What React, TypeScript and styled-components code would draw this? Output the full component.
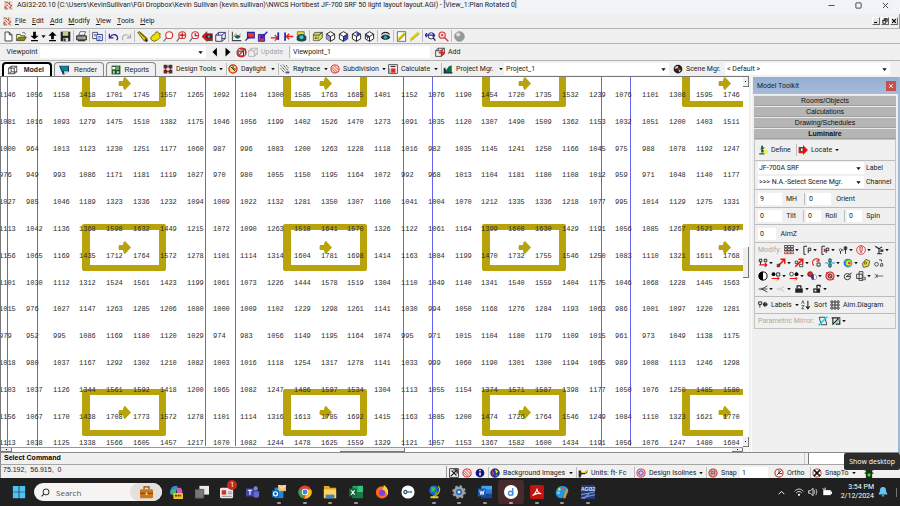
import React from 'react';
import styled, { createGlobalStyle, css } from 'styled-components';

const ui = '"Roboto", "Open Sans", sans-serif';
const gothic = '"Liberation Sans", Arial, sans-serif';

const GlobalStyle = createGlobalStyle`
  *, *::before, *::after { box-sizing: border-box; }
  body { margin: 0; background: #f0f0f0; }
  button, input, select { font: inherit; color: inherit; margin: 0; padding: 0; border: 0; background: none; border-radius: 0; }
  button { cursor: default; white-space: nowrap; }
  svg { display: block; flex: none; }
`;

/* ---------- icons, each drawn on a 16 x 16 grid ---------- */

const cube = (face: React.ReactNode = null) => (
  <>
    <path d="M8 1l6 3.5v7L8 15l-6-3.5v-7z" fill="#fff" stroke="#222" strokeWidth="1.4" />
    {face}
    <path d="M2 4.500l6 3.500 6-3.500M8 8v7" fill="none" stroke="#222" strokeWidth="1.400" />
  </>
);
const lens = (color: string) => (
  <>
    <circle cx="9" cy="6" r="5" fill="#fff" stroke={color} strokeWidth="1.6" />
    <path d="M5 10l-4 5" stroke="#777" strokeWidth="2" />
  </>
);
const wireBox = (color: string) => (
  <path d="M1 6h9v9H1zM5 2h10v9h-5M1 6l4-4M10 6l5-4M10 15l5-4M5 2v4" fill="none" stroke={color} strokeWidth="1.3" />
);

const icons: Record<string, React.ReactNode> = {
  logo: (
    <>
      <rect width="16" height="16" fill="#f3ddd6" />
      <path d="M1 2h5M3 5l4 4M10 1v5l4 3M2 8v6h5M9 10l5 5M10 13l4-6M5 2l5 4M1 11h4" stroke="#a8452c" strokeWidth="1.5" fill="none" />
    </>
  ),
  page: <path d="M3 1.500h6l4 4v9H3zM9 1.500v4h4" fill="#fff" stroke="#333" strokeWidth="1.300" />,
  open: (
    <>
      <path d="M1 14V5h5l1 2h6v3" fill="#ffffa0" stroke="#333" strokeWidth="1.2" />
      <path d="M1 14l3-5h11l-3 5z" fill="#8a8a00" stroke="#333" />
      <path d="M9 3c2-2 4-1 5 2" fill="none" stroke="#333" />
    </>
  ),
  down: <path d="M6 1h4v6h4L8 12 2 7h4zM3 13h10v2H3z" fill="#000" />,
  up: <path d="M8 1l6 6h-4v5H6V7H2zM3 13h10v2H3z" fill="#000" />,
  save: (
    <>
      <path d="M1 1h14v14H1z" fill="#222" />
      <path d="M4 1h8v6H4z" fill="#c9c98c" />
      <path d="M5 10h7v5H5z" fill="#ddd" />
      <path d="M6 11h2v4H6z" fill="#222" />
    </>
  ),
  print: (
    <>
      <path d="M4 6l2-5h8l-2 5z" fill="#fff" stroke="#333" />
      <path d="M1 7h14v6H1z" fill="#999" stroke="#222" strokeWidth="1.400" />
      <path d="M3 13h10v2H3z" fill="#333" />
      <path d="M10 10h3" stroke="#dd0" strokeWidth="1.500" />
    </>
  ),
  copy: (
    <>
      <path d="M1 2h7v9H1z" fill="#fff" stroke="#334" strokeWidth="1.200" />
      <path d="M7 5h8v9H7z" fill="#fff" stroke="#223a9a" strokeWidth="1.400" />
      <path d="M9 8h4M9 10h4M9 12h3M3 5h3M3 7h3" stroke="#223a9a" />
    </>
  ),
  undo: <path d="M2 4v6h6M3 9c3-5 10-5 11 1 0 2-1 3-2 3" fill="none" stroke="#22229c" strokeWidth="1.800" />,
  redo: <path d="M14 4v6H8M13 9C10 4 3 4 2 10c0 2 1 3 2 3" fill="none" stroke="#aaa" strokeWidth="1.500" />,
  pencil: (
    <>
      <path d="M1 2l3-1 11 10-1 4-4-1z" fill="#e2d400" stroke="#444" strokeWidth="1.200" />
      <path d="M4 2l10 10" stroke="#665c00" strokeWidth="1.500" />
      <path d="M12 12l3 3" stroke="#111" strokeWidth="2.500" />
    </>
  ),
  hand: <path d="M1 10l3-4 3-1 1-3 3-1 1 2 3 1-1 3 1 2-4 4-5 2-4-2z" fill="#ece000" stroke="#777000" strokeWidth="1.400" />,
  zoomIn: lens('#d33'),
  zoomWin: (
    <>
      {lens('#d33')}
      <path d="M9 2v8M5 6h8" stroke="#b00" strokeWidth="1.500" />
    </>
  ),
  zoomPrev: (
    <>
      {lens('#d33')}
      <path d="M9 3v4h4" stroke="#229" strokeWidth="1.500" fill="none" />
    </>
  ),
  eyeRed: (
    <>
      <path d="M0 8l7-7v3h8v10H7v1z" fill="#d11" stroke="#333" />
      <path d="M5 8c3-4 7-4 10 0-4 4-7 4-10 0z" fill="#123" />
      <circle cx="10" cy="8" r="2" fill="#2ab5c0" />
    </>
  ),
  box3d: wireBox('#2d2d70'),
  chart: (
    <>
      <path d="M2 1v13h13" stroke="#444" strokeWidth="1.500" fill="none" />
      <path d="M3 9l4-5 3 6 4-6" stroke="#bb9" strokeWidth="2" fill="#f4ec60" />
      <path d="M5 8c3-3 6-3 9 0-3 4-6 4-9 0z" fill="#145e70" />
    </>
  ),
  redBox: (
    <>
      <path d="M5 2h10v8H5z" fill="#e33" stroke="#22a" strokeWidth="1.500" />
      <path d="M2 14l6-6" stroke="#22a" strokeWidth="2" />
    </>
  ),
  slant: (
    <>
      <path d="M2 5h9v10H2z" fill="#d33" stroke="#22a" strokeWidth="1.300" />
      <path d="M15 1L6 10V6m0 4h4" stroke="#22c" strokeWidth="2" fill="none" />
    </>
  ),
  trimL: <><path d="M1 10h9M7 6l4 4-4 4" stroke="#d22" strokeWidth="2" fill="none" /><path d="M12 2v11" stroke="#22a" strokeWidth="2.500" /></>,
  trimR: <><path d="M15 8H6M9 4L5 8l4 4" stroke="#d22" strokeWidth="2" fill="none" /><path d="M3 2v12" stroke="#22a" strokeWidth="2.500" /></>,
  eyeBox: (
    <>
      <path d="M2 1h10v5H2z" fill="#e6da2a" stroke="#555" />
      <path d="M1 8c4-5 10-5 14 0v5c-4 3-10 3-14 0z" fill="#1d4a50" />
      <circle cx="8" cy="9" r="3" fill="#4ac4c0" />
    </>
  ),
  boxPlan: (
    <>
      <path d="M2 5h8v9H2z" fill="#f0e93a" stroke="#444" />
      <path d="M4 2h11L10 6H2zM10 6l5-4v8l-5 4" fill="#cfe35c" stroke="#444" strokeWidth="1.200" />
      <path d="M4 9h4M4 11h4" stroke="#22a" />
    </>
  ),
  cubeA: cube(<path d="M2 4.500L8 8v7l-6-3.500z" fill="#8f98d8" />),
  cubeB: cube(<path d="M14 4.500L8 8v7l6-3.500z" fill="#3c48c8" />),
  cubeC: cube(<path d="M8 1l6 3.500L8 8z" fill="#3c48c8" />),
  cubeD: cube(<path d="M2 4.500L8 8l-3 4z" fill="#3c48c8" />),
  eye: (
    <>
      <path d="M1 9c3-5 11-5 14 0-3 5-11 5-14 0z" fill="#234" />
      <circle cx="8" cy="9" r="2.500" fill="#3aa" />
      <path d="M2 5c3-4 9-4 12 0" stroke="#222" strokeWidth="1.500" fill="none" />
    </>
  ),
  sheet: <><path d="M2 1h12v14H2z" fill="#fff" stroke="#555" strokeWidth="1.200" /><path d="M3 13L13 3" stroke="#d8cc00" strokeWidth="3.500" /><path d="M4 14L14 4" stroke="#555" /></>,
  ruler: <><path d="M2 13L14 2" stroke="#e4d800" strokeWidth="3.500" /><path d="M2 15L15 4" stroke="#777" /></>,
  zoomBlue: (
    <>
      <circle cx="9" cy="7" r="4.500" fill="#fff" stroke="#333" strokeWidth="1.400" />
      <path d="M12 10l3 4" stroke="#333" strokeWidth="2" />
      <path d="M0 6h14M3 3L0 6l3 3M11 3l3 3-3 3" stroke="#22c" strokeWidth="1.700" fill="none" />
    </>
  ),
  zoomRed: <><circle cx="6" cy="6" r="4.500" fill="#fdd" stroke="#d33" strokeWidth="1.700" /><path d="M9 9l6 6" stroke="#d33" strokeWidth="2" /><circle cx="6" cy="6" r="1.500" fill="#d33" /></>,
  ball: <><circle cx="8" cy="8" r="7" fill="#999" stroke="#888" /><circle cx="6" cy="5" r="3" fill="#ddd" /></>,
  back: <path d="M11 1v14L4 8z" fill="#000" />,
  forward: <path d="M4 1l8 7-8 7z" fill="#000" />,
  noBox: <><path d="M3 6h8v7H3zM6 3h8v7" fill="none" stroke="#222" strokeWidth="1.400" /><circle cx="8" cy="8" r="6.500" fill="none" stroke="#c22" strokeWidth="1.800" /><path d="M3 13L13 3" stroke="#c22" strokeWidth="1.800" /></>,
  greyBox: wireBox('#aaa'),
  addBox: <>{wireBox('#333')}<path d="M11 4v10M6 9h10" stroke="#d22" strokeWidth="3" /></>,
  model: <path d="M1 5h9v9H1zM5 2h9v9M1 5l4-3M10 5l4-3M10 14l4-3M5 2v9h9M1 14l4-3" fill="none" stroke="#222" strokeWidth="1.200" />,
  render: <><path d="M0 1h16v10H9v4H6z" fill="#123a78" /><path d="M2 2h12v7H6z" fill="#108a86" /><path d="M8 10h7v4H9z" fill="#d8d8d8" /></>,
  report: <><path d="M1 1h14v14H1z" fill="#234a2c" /><path d="M2 3h5v4H2z" fill="#fff" /><path d="M8 2h5v6H8z" fill="#56b05a" /><path d="M3 9h3v5H3zM9 10h4v3H9z" fill="#9fd6a2" /></>,
  design: <><path d="M1 1h6v6H1zM9 1h6v6H9zM1 9h6v6H1zM9 9h6v6H9z" fill="#7b2621" /><path d="M2 4h12M2 12h12M4 2v12M12 2v12" stroke="#333" strokeWidth="1.200" /></>,
  sun: <><circle cx="8" cy="8" r="6.500" fill="#f5e06a" stroke="#d22" strokeWidth="2" /><path d="M4 4l8 8M8 3v5h5" stroke="#333" strokeWidth="1.500" fill="none" /></>,
  ray: <><path d="M1 2l8 9M5 1l8 10M1 7l6 7M10 2l4 5" stroke="#333" strokeWidth="1.500" strokeDasharray="2 1" /><path d="M9 12h6v3H9z" fill="#555" /></>,
  no: <><circle cx="8" cy="8" r="6.500" fill="#f8dcd8" stroke="#d33" strokeWidth="1.600" /><path d="M3 4l9 9M6 2l8 8M2 7l7 7" stroke="#d33" strokeWidth="1.200" /></>,
  calc: <><path d="M1 1h14v14H1z" fill="#fff" stroke="#333" strokeWidth="1.300" /><path d="M4 3h8v2H4z" fill="#333" /><path d="M5 7h7v7H5z" fill="#e22" /><path d="M3 7v7" stroke="#333" /></>,
  project: <><path d="M1 14V6l4 4 4-6 5-2v12z" fill="#0c6b4a" /><path d="M1 14h14M3 6v8" stroke="#123" strokeWidth="2" /></>,
  scene: <><circle cx="8" cy="8" r="7" fill="#222" /><path d="M3 8a5 5 0 0 1 5-5v3zM9 10l4-1-3 4z" fill="#ddd" /><circle cx="9" cy="8" r="2" fill="#c22" /></>,
  define: <><circle cx="12" cy="11" r="4" fill="#f6ef5a" /><path d="M5 1h3v3h3L7 8 2 6h3zM5 8h4v4H5zM2 13h8v2H2z" fill="#1b5b3d" /></>,
  locate: <><path d="M1 3h7V0l8 8-8 8v-3H1z" fill="#e11" /><path d="M4 5h4v5H4z" fill="#fff" stroke="#222" /></>,
  grid9: <>{[3, 8, 13].map((x) => [3, 8, 13].map((y) => <circle key={`${x}-${y}`} cx={x} cy={y} r="1.800" fill="#fff" stroke="#222" strokeWidth="1.500" />))}</>,
  grid9r: <>{[3, 8, 13].map((x) => [3, 8, 13].map((y) => <rect key={`${x}-${y}`} x={x - 2} y={y - 2} width="4" height="3" fill="none" stroke={y === 13 ? '#c22' : '#222'} strokeWidth="1.200" />))}</>,
  poles: <path d="M3 15V2h5M10 13V5h4v4h-4M3 15h3" fill="none" stroke="#222" strokeWidth="1.500" />,
  polesR: <><path d="M3 15V2h5M10 13V5h4v4h-4M3 15h3" fill="none" stroke="#222" strokeWidth="1.500" /><path d="M6 6h3v5H6z" fill="#e11" /></>,
  polesA: <><path d="M4 14V8h5M12 14V3M10 3h4v4h-4z" fill="none" stroke="#222" strokeWidth="1.500" /><circle cx="4" cy="8" r="2" fill="#fff" stroke="#222" /></>,
  lampNo: <><circle cx="8" cy="8" r="7" fill="none" stroke="#d33" strokeWidth="1.400" /><path d="M6 3h4v5L8 13 6 8z" fill="#f6c0b0" stroke="#c22" /></>,
  lampUp: <><path d="M2 2l6 4 5-3M8 6v8M5 14h8" stroke="#222" strokeWidth="1.800" fill="none" /><path d="M10 7h5v4h-5z" fill="#344" /></>,
  swap: <><path d="M2 2h4v4H2zM10 2h4v4h-4zM4 6v5" fill="none" stroke="#222" strokeWidth="1.500" /><path d="M2 11h12M11 8l3 3-3 3" stroke="#e11" strokeWidth="2" fill="none" /></>,
  arrowR: <><path d="M2 14L13 3M7 2h7v7" stroke="#e11" strokeWidth="2.400" fill="none" /><path d="M2 10h4v4H2z" fill="none" stroke="#222" strokeWidth="1.300" /></>,
  arrowR2: <><path d="M2 14L13 3M7 2h7v7" stroke="#e11" strokeWidth="2.400" fill="none" /><path d="M2 5h4v4H2zM9 10h5v4H9z" fill="#fff" stroke="#222" strokeWidth="1.300" /></>,
  rotate: <><path d="M3 12a6 6 0 0 1 8-9M11 1v4H7" stroke="#e11" strokeWidth="1.800" fill="none" /><path d="M8 8h5v5H8z" fill="none" stroke="#222" strokeWidth="1.400" /></>,
  align: <><path d="M0 8h16" stroke="#20c0d0" strokeWidth="2" /><path d="M6 2h4v4H6zM6 10h4v4H6zM8 0v16" fill="none" stroke="#156" strokeWidth="1.400" /></>,
  rainbow: <><circle cx="8" cy="8" r="7" fill="#2a6adf" /><circle cx="9" cy="8" r="5.500" fill="#35d048" /><circle cx="9" cy="8" r="4" fill="#f4e02e" /><circle cx="10" cy="8" r="2.200" fill="#e33" /></>,
  bolt: <><path d="M2 9l6-7 6 3-2 8-8 2z" fill="#eee322" stroke="#444" strokeWidth="1.300" /><circle cx="7" cy="8" r="2" fill="none" stroke="#222" /></>,
  percent: <><circle cx="4" cy="10" r="3" fill="none" stroke="#333" strokeWidth="1.300" /><path d="M8 3h4v3M11 9h3v4h-4z" fill="none" stroke="#333" strokeWidth="1.300" /></>,
  contrast: <><circle cx="8" cy="8" r="6.500" fill="#fff" stroke="#000" strokeWidth="1.500" /><path d="M8 1a7 7 0 0 0 0 14z" fill="#000" /></>,
  dots: <><circle cx="4" cy="5" r="3" fill="#000" /><path d="M9 3h5v5H9z" fill="none" stroke="#222" strokeWidth="1.400" /><path d="M1 12h12M10 9l3 3-3 3" stroke="#e11" strokeWidth="1.600" fill="none" /></>,
  dots2: <><circle cx="4" cy="5" r="3" fill="#fff" stroke="#222" strokeWidth="1.300" /><circle cx="12" cy="5" r="3" fill="#000" /><path d="M1 12h12M10 9l3 3-3 3" stroke="#e11" strokeWidth="1.600" fill="none" /></>,
  swatch: <><circle cx="5" cy="5" r="4" fill="#e22" stroke="#222" /><circle cx="11" cy="10" r="4" fill="#33c" stroke="#222" /><path d="M11 6a4 4 0 0 1 0 8z" fill="#fff" /></>,
  target: <><circle cx="8" cy="8" r="6.500" fill="#e9b2a8" stroke="#c22" strokeWidth="1.700" /><circle cx="8" cy="8" r="3" fill="none" stroke="#333" strokeWidth="1.500" /><path d="M2 2l12 12" stroke="#c22" strokeWidth="1.500" /></>,
  aim: <><circle cx="7" cy="9" r="5" fill="none" stroke="#333" strokeWidth="1.500" /><path d="M5 9l9-6M5 9h6" stroke="#333" strokeWidth="1.500" /></>,
  copyPlus: <><path d="M1 5h9v7H1zM5 1h6v14H5z" fill="none" stroke="#333" strokeWidth="1.400" /><path d="M10 10h5v4h-5z" fill="#bbb" stroke="#333" /></>,
  stem: <path d="M15 8H5M5 5v6M5 8L1 5M5 8l-4 3" stroke="#555" strokeWidth="1.300" fill="none" />,
  fan: <path d="M1 8h3M5 6v4M6 8l9-5M6 8h9M6 8l9 5" stroke="#333" strokeWidth="1.400" fill="none" />,
  fanGrey: <path d="M1 8h3M5 6v4M7 8l6-4M7 8l6 4" stroke="#bbb" strokeWidth="1.400" fill="none" />,
  lock: <><path d="M5 7V3h6v4" fill="none" stroke="#222" strokeWidth="2" /><path d="M2 7h12v7H2z" fill="#222" /></>,
  unlock: <><path d="M8 7V2h5v3" fill="none" stroke="#222" strokeWidth="2" /><path d="M2 7h11v7H2z" fill="#222" /><path d="M4 9h3v3H4z" fill="#eee" /></>,
  labels: <><path d="M1 3h5v4H1zM3 7v5" fill="none" stroke="#222" strokeWidth="1.500" /><path d="M8 7h7M11 3v8M9 5h5v4H9z" stroke="#222" strokeWidth="1.500" fill="none" /></>,
  sort: <><path d="M1 6l2-5 2 5M1 9h4l-4 5h4" stroke="#444" strokeWidth="1.300" fill="none" /><path d="M11 1v12M8 10l3 4 3-4" stroke="#222" strokeWidth="1.700" fill="none" /></>,
  mirror: <><path d="M2 2h9l3 12H5z" fill="none" stroke="#222" strokeWidth="1.300" /><path d="M1 15L15 1" stroke="#22cfe0" strokeWidth="2.400" /></>,
  mirror2: <><path d="M1 3h14M3 3v10l9-9M8 13h6V5" fill="none" stroke="#222" strokeWidth="1.800" /><path d="M6 14L15 5" stroke="#22b8b0" strokeWidth="1.500" /></>,
  picker: <><path d="M1 1h14v14H1z" fill="#fff" stroke="#333" strokeWidth="1.500" /><path d="M3 13l9-9M4 4l8 8M7 3h6v6" stroke="#222" strokeWidth="2" fill="none" /></>,
  info: <><circle cx="8" cy="8" r="7" fill="#15157c" /><path d="M8 7v5" stroke="#fff" strokeWidth="2.400" /><circle cx="8" cy="4" r="1.400" fill="#fff" /></>,
  image: <><circle cx="8" cy="8" r="7" fill="#2334b4" stroke="#224" /><path d="M3 3l4 5-3 5z" fill="#e33" /><path d="M8 2l5 3-3 4z" fill="#dfe82e" /><path d="M9 10l4 1-4 3z" fill="#3b4" /></>,
  units: <><path d="M1 4h4v3h5l5-4v4l-4 3H6l-2 5H1z" fill="#2e2e2e" /><path d="M6 7h6l3-3" stroke="#e8d820" strokeWidth="2" fill="none" /></>,
  isoline: <><circle cx="8" cy="8" r="6.500" fill="#e7c4e2" stroke="#d33" strokeWidth="1.500" /><circle cx="8" cy="8" r="3.500" fill="none" stroke="#33b" strokeWidth="1.300" /></>,
  snap: <><circle cx="8" cy="8" r="6.500" fill="#e7b4aa" stroke="#c33" strokeWidth="1.700" /><path d="M4 6h8M4 9h8M6 4v8M10 4v8" stroke="#555" /></>,
  ortho: <><circle cx="8" cy="8" r="6.500" fill="#fff" stroke="#c33" strokeWidth="1.800" /><path d="M8 3v6h5M4 12l8-8" stroke="#333" strokeWidth="1.500" fill="none" /></>,
  snapTo: <><circle cx="8" cy="8" r="6.500" fill="#fff" stroke="#c33" strokeWidth="1.500" /><path d="M3 3l10 10M13 3L3 13" stroke="#111" strokeWidth="2.400" /></>,
  traffic: <><path d="M4 0h8v16H4zM1 3h14M1 8h14" fill="#143814" stroke="#143814" strokeWidth="2" /><circle cx="8" cy="11" r="2.500" fill="#3ee23e" /></>,

  windows: <path d="M1 1h6.600v6.600H1zM8.400 1H15v6.600H8.400zM1 8.400h6.600V15H1zM8.400 8.400H15V15H8.400z" fill="#4cc2f5" />,
  briefcase: <><path d="M5 4V1h6v3" fill="none" stroke="#8a4b10" strokeWidth="1.500" /><rect y="4" width="16" height="11" rx="1.500" fill="#c9771c" /><path d="M0 9h16" stroke="#8a4b10" strokeWidth="1.500" /><path d="M7 8h2v3H7z" fill="#ffe08a" /></>,
  copilot: <><path d="M2 11C0 8 2 2 6 1h4l-3 9z" fill="#2f8ae0" /><path d="M2 6c0 5 2 6 5 5l2-7z" fill="#44b95a" /><path d="M9 3h4c3 2 3 7 0 10l-4-3z" fill="#d957b5" /><rect x="5" y="9" width="11" height="7" rx="1" fill="#f3c32c" /><path d="M7 12h7" stroke="#3a2d00" strokeWidth="2" strokeDasharray="2 1" /></>,
  taskview: <><path d="M5 1h11v10H5z" fill="#e9e9e9" /><path d="M0 5h10v10H0z" fill="#777" stroke="#555" /></>,
  news: <><rect y="3" width="15" height="12" rx="1.500" fill="#f1e6e6" /><path d="M2 6h5v5H2z" fill="#c03535" /><path d="M9 8h5M9 10h5M2 13h12" stroke="#888" /></>,
  teams: <><circle cx="11" cy="4" r="2.500" fill="#7b83eb" /><path d="M8 7h7v5c0 3-6 4-7 0z" fill="#6069d4" /><path d="M0 4h9v9H0z" fill="#3f48b5" /><path d="M2 6h5M4.500 6v5" stroke="#fff" strokeWidth="1.300" /></>,
  outlook: <><path d="M3 3h10v12H3z" fill="#1b88d8" /><path d="M7 0h9v7H7z" fill="#f2bd73" /><path d="M7 0l4.500 4L16 0" stroke="#fff" fill="none" /><path d="M0 6h8v8H0z" fill="#0f64b4" /><circle cx="4" cy="10" r="2.300" fill="none" stroke="#fff" strokeWidth="1.400" /></>,
  chrome: <><circle cx="8" cy="8" r="7.500" fill="#e34133" /><path d="M1.500 4.300L8 8l-2 7.300A7.500 7.500 0 0 1 1.500 4.300z" fill="#2fa24f" /><path d="M15 5H8l2 5-3 5.500A7.500 7.500 0 0 0 15 5z" fill="#fbc016" /><circle cx="8" cy="8" r="3.700" fill="#fff" /><circle cx="8" cy="8" r="2.800" fill="#3f7fe8" /></>,
  folder: <><path d="M1 1h6l1 2h7v12H1z" fill="#e2a52b" /><path d="M1 5h14v10H1z" fill="#fbd464" /><path d="M3 11h10v4H3z" fill="#3287d4" /></>,
  excel: <><path d="M4 1h12v14H4z" fill="#24a366" /><path d="M10 1h6v7h-6z" fill="#33c481" /><path d="M4 8h12v7H4z" fill="#177a47" /><path d="M0 4h9v9H0z" fill="#10683a" /><path d="M2.500 6l4 5M6.500 6l-4 5" stroke="#fff" strokeWidth="1.300" /></>,
  firefox: <><circle cx="8" cy="8.500" r="7" fill="#ff6a26" /><path d="M10 0c5 3 6 8 4 12-1-5-4-6-6-7 2-1 2-3 2-5z" fill="#ffce35" /><circle cx="8" cy="9" r="3.500" fill="#7a45d8" /><path d="M1 6c0 6 4 9 9 9-5 1-9-2-9-9z" fill="#e3204f" /></>,
  key: <><circle cx="8" cy="8" r="7.500" fill="#fff" /><circle cx="5" cy="8" r="1.800" fill="none" stroke="#246" strokeWidth="1.300" /><path d="M7 8h3" stroke="#246" strokeWidth="1.300" /><circle cx="11.500" cy="8" r="1.300" fill="#2aa6c8" /></>,
  globe: <><circle cx="8" cy="6" r="5.500" fill="#1a63c8" /><path d="M5 2l5 1-1 4-4 1zM9 8h3l-2 3z" fill="#3ac04e" /><path d="M13 1c3 4 1 10-4 11" stroke="#d8c020" strokeWidth="1.200" fill="none" /><path d="M4 14h9M8 12v2" stroke="#e6cf28" strokeWidth="2.400" /></>,
  gear: <><circle cx="8" cy="8" r="6.300" fill="#9aa2ac" /><circle cx="8" cy="8" r="6.600" fill="none" stroke="#9aa2ac" strokeWidth="2.400" strokeDasharray="2.600 2.580" /><circle cx="8" cy="8" r="3.400" fill="#1c5fae" /><circle cx="8" cy="8" r="1.800" fill="#cfe6ff" /></>,
  word: <><path d="M4 1h12v14H4z" fill="#2b7cd3" /><path d="M4 1h12v4H4z" fill="#41a5ee" /><path d="M4 10h12v5H4z" fill="#14459a" /><path d="M0 4h9v9H0z" fill="#185abd" /><path d="M2 6l1.300 5 1.200-4 1.200 4L7 6" stroke="#fff" fill="none" /></>,
  dialog: <><circle cx="8" cy="8" r="8" fill="#fff" /><circle cx="7.500" cy="9.500" r="2.400" fill="none" stroke="#3b8fe0" strokeWidth="1.600" /><path d="M10 3.500V12" stroke="#3b8fe0" strokeWidth="1.600" /></>,
  acrobat: <><rect width="16" height="16" rx="2" fill="#c4120c" /><path d="M3 12c3-2 5-6 5-8 0 3 2 6 5 6-4-1-7 0-10 2z" fill="none" stroke="#fff" strokeWidth="1.300" /></>,
  paint: <><path d="M8 1c5 0 8 3 7 7s-4 2-5 4-1 3-3 3C3 15 0 11 1 7s4-6 7-6z" fill="#1f9ae0" /><circle cx="5" cy="5" r="1.500" fill="#f4d03a" /><circle cx="9" cy="4" r="1.500" fill="#e8523a" /><circle cx="4" cy="9" r="1.500" fill="#7fd8f4" /><path d="M9 15l4-11 2 1-3 10z" fill="#d9953a" /></>,
  agi: <><rect width="16" height="16" fill="#253a6e" /><path d="M0 11l16-3M0 15l16-4M3 16l7-7" stroke="#6f94d8" strokeWidth="1.300" /></>,
  caret: <path d="M3 11l5-5 5 5" fill="none" stroke="#fff" strokeWidth="1.700" />,
  wifi: <><path d="M1 7c4-5 10-5 14 0M3.500 9.500c3-3 6-3 9 0" fill="none" stroke="#ddd" strokeWidth="1.500" /><circle cx="8" cy="12.500" r="1.700" fill="#fff" /></>,
  sound: <><path d="M1 6h3l4-4v12l-4-4H1z" fill="none" stroke="#fff" strokeWidth="1.300" /><path d="M10 5c1 2 1 4 0 6M12.500 3c2 3 2 7 0 10" fill="none" stroke="#ddd" strokeWidth="1.300" /></>,
  battery: <><path d="M2 5h12v8H2z" fill="#fff" /><path d="M14 7h2v4h-2z" fill="#fff" /><path d="M1 2l3 3M5 1v4" stroke="#fff" strokeWidth="1.500" /></>,
  bell: <path d="M8 0c4 0 5 3 5 7l2 4v1H1v-1l2-4c0-4 1-7 5-7zM6 13h4c0 3-4 3-4 0z" fill="#62c7f2" />,
  search: <><circle cx="9" cy="7" r="5.300" fill="none" stroke="#222" strokeWidth="1.700" /><path d="M5 11l-4 4" stroke="#222" strokeWidth="1.900" /></>,
  min: <path d="M1 8h14" stroke="#333" strokeWidth="2" />,
  max: <rect x="2" y="2" width="12" height="12" rx="1" fill="none" stroke="#333" strokeWidth="2" />,
  close: <path d="M2 2l12 12M14 2L2 14" stroke="#333" strokeWidth="2" />,
  closeWhite: <path d="M3 3l10 10M13 3L3 13" stroke="#fff" strokeWidth="2.400" />,
  mdiMin: <path d="M3 12h8" stroke="#000" strokeWidth="3" />,
  mdiRestore: <path d="M5 2h9v7h-3M2 6h8v8H2zM5 3h9M2 7h8" fill="none" stroke="#000" strokeWidth="2" />,
  mdiClose: <path d="M3 3l10 10M13 3L3 13" stroke="#000" strokeWidth="3" />,
  tri: <path d="M1 4h14l-7 9z" fill="#111" />,
};

const Icon = ({ name, size = 11 }: { name: string; size?: number }) => (
  <svg width={size} height={size} viewBox="0 0 16 16" aria-hidden="true">
    {icons[name]}
  </svg>
);

/* ---------- shared pieces ---------- */

const Shell = styled.div`
  display: flex;
  flex-direction: column;
  height: 100vh;
  overflow: hidden;
  background: #f0f0f0;
  color: #222;
  font: 7px/10px ${ui};
`;

const Bar = styled.div<{ $h: number }>`
  display: flex;
  align-items: center;
  flex: none;
  height: ${(p) => p.$h}px;
`;

const Spacer = styled.div`
  flex: 1;
`;

const Divider = styled.span`
  flex: none;
  width: 1px;
  height: 12px;
  margin: 0 1px;
  background: #bdbdbd;
`;

const ToolButton = styled.button<{ $w?: number; $muted?: boolean }>`
  display: flex;
  align-items: center;
  gap: 3px;
  flex: none;
  width: ${(p) => (p.$w ? `${p.$w}px` : 'auto')};
  height: 13px;
  justify-content: ${(p) => (React.Children.count(p.children) > 1 ? 'flex-start' : 'center')};
  color: ${(p) => (p.$muted ? '#a4a4a4' : 'inherit')};
`;

const Grow = styled.span`
  flex: 1;
  text-align: left;
`;

const Gap = styled.span<{ $w: number }>`
  flex: none;
  width: ${(p) => p.$w}px;
`;

const ComboBox = styled.div<{ $w?: number }>`
  display: flex;
  align-items: center;
  flex: ${(p) => (p.$w ? `0 0 ${p.$w}px` : '1')};
  height: 12px;
  background: #fff;
  select {
    flex: 1;
    min-width: 0;
    height: 12px;
    padding-left: 2px;
    appearance: none;
    outline: 0;
  }
  svg { margin: 0 3px 0 -7px; pointer-events: none; }
`;

const Combo = ({ label, value, w }: { label: string; value: string; w?: number }) => (
  <ComboBox $w={w}>
    <select aria-label={label} defaultValue={value}>
      <option>{value}</option>
    </select>
    <Icon name="tri" size={5} />
  </ComboBox>
);

/* ---------- title, menu and tool bars ---------- */

const TitleBar = styled(Bar)`
  padding: 0 3px 4px 4px;
  gap: 4px;
  background: linear-gradient(90deg, #f3f3f3, #f0f3f9);
  white-space: nowrap;
`;

const WindowButtons = styled.div`
  display: flex;
  gap: 20px;
  padding-right: 8px;
`;

const MenuBar = styled(Bar)`
  padding: 0 1px 0 3px;
  border-bottom: 1px solid #b4b4b4;
  border-right: 1px solid #999;
`;

const MenuItem = styled.button`
  margin-left: 6px;
  &:first-of-type { margin-left: 3px; }
  &::first-letter { text-decoration: underline; }
`;

const MdiButton = styled.button`
  display: grid;
  place-items: center;
  width: 8px;
  height: 8px;
  margin-left: 1px;
  border: 1px solid;
  border-color: #fff #666 #666 #fff;
  background: #e6e6e6;
`;

const Tools = styled(Bar)`
  padding-left: 2px;
  border-bottom: 1px solid #b4b4b4;
`;

const ViewBar = styled(Bar)`
  border-bottom: 1px solid #b4b4b4;
  padding-left: 4px;
`;

const Field = styled.input<{ $w: number }>`
  flex: none;
  width: ${(p) => p.$w}px;
  height: 12px;
  padding: 0 2px;
  background: #fff;
`;

const ModeBar = styled(Bar)`
  padding: 1px 10px 0 2px;
  align-items: stretch;
`;

const Tab = styled.button<{ $active?: boolean }>`
  display: flex;
  align-items: center;
  width: 50px;
  margin-right: 2px;
  padding: 0 6px 0 4px;
  border: 1px solid #888;
  border-bottom: 0;
  border-radius: 4px 4px 0 0;
  font: 7px/10px ${gothic};
  ${(p) => p.$active && css`
    border: 2px solid #000;
    border-bottom: 0;
    font-weight: 700;
    background: #fff;
  `}
`;

const ModeTools = styled.div`
  display: flex;
  align-items: center;
  flex: 1;
  padding-left: 5px;
`;

const toolRow = [
  'page', 'open', 'down', '>', 'up', 'save', '|', 'print', '|', 'copy', '|', 'undo', 'redo', '|',
  'pencil', 'hand', 'zoomIn', 'zoomWin', 'zoomPrev', 'eyeRed', 'box3d', '|',
  'chart', 'redBox', 'slant', 'trimL', 'trimR', 'eyeBox', '|',
  'boxPlan', 'cubeA', 'cubeB', 'cubeC', 'cubeD', '|', 'eye', '|', 'sheet', 'ruler', '|',
  'zoomBlue', 'zoomRed', '|', 'ball',
];

/* ---------- plan view ---------- */

const Workspace = styled.div`
  display: flex;
  flex: 1;
  min-height: 0;
`;

const PlanFrame = styled.div`
  display: grid;
  grid-template: minmax(0, 1fr) 5px / minmax(0, 1fr) 6px;
  flex: 1;
  min-width: 0;
  border-left: 1px solid #777;
  border-top: 1px solid #777;
  background: #f6f6f6;
`;

const PlanView = styled.div`
  overflow: hidden;
  background: #fff;
  svg text {
    font: 7px "Liberation Mono", monospace;
    fill: #2c2c2c;
    white-space: pre;
  }
`;

const VScroll = styled.div`
  display: flex;
  flex-direction: column;
  justify-content: space-between;
  background: #fff;
`;

const HScroll = styled.div`
  display: flex;
  justify-content: space-between;
  background: #fff;
  border-top: 1px solid #999;
`;

const ScrollPiece = styled.div<{ $w: number; $h: number }>`
  display: grid;
  place-items: center;
  width: ${(p) => p.$w}px;
  height: ${(p) => p.$h}px;
  background: #efefef;
  border-right: 1px solid #777;
  border-bottom: 1px solid #777;
`;

const Dot = styled.span`
  width: 1px;
  height: 1px;
  background: #000;
`;

const readings = `
1146 1056 1158 1418 1701 1745 1557 1265 1092 1104 1300 1585 1763 1685 1401 1152 1076 1190 1454 1720 1735 1532 1239 1076 1101 1308 1595 1746
1081 1016 1093 1279 1475 1510 1382 1175 1046 1056 1199 1402 1526 1470 1273 1091 1035 1120 1307 1490 1509 1362 1153 1032 1051 1200 1403 1511
1000 964 1013 1123 1230 1251 1177 1060 987 996 1083 1200 1263 1228 1118 1016 982 1035 1145 1241 1250 1166 1045 975 988 1078 1192 1247
976 949 993 1086 1171 1181 1119 1027 970 980 1055 1150 1195 1164 1072 992 968 1013 1104 1181 1180 1108 1012 959 971 1048 1140 1177
1027 985 1046 1189 1323 1336 1232 1094 1009 1022 1132 1281 1350 1307 1160 1041 1004 1070 1212 1335 1336 1218 1077 995 1014 1129 1275 1331
1113 1042 1136 1368 1598 1632 1449 1215 1072 1090 1263 1518 1641 1570 1326 1122 1061 1164 1399 1608 1630 1429 1191 1056 1085 1267 1521 1627
1156 1065 1169 1435 1712 1764 1572 1278 1101 1114 1314 1604 1781 1698 1414 1163 1084 1199 1470 1732 1755 1546 1250 1083 1110 1321 1611 1768
1101 1030 1112 1312 1524 1561 1423 1199 1061 1073 1226 1444 1578 1519 1304 1110 1049 1140 1341 1540 1559 1404 1175 1046 1068 1228 1445 1563
1015 976 1027 1147 1263 1285 1206 1080 1000 1009 1102 1229 1298 1261 1141 1030 994 1050 1168 1276 1284 1193 1063 986 1001 1097 1220 1281
979 952 995 1086 1169 1180 1120 1029 974 983 1056 1149 1195 1164 1074 995 971 1015 1104 1180 1179 1109 1015 961 973 1049 1138 1175
1018 980 1037 1167 1292 1302 1210 1082 1003 1016 1118 1254 1317 1278 1141 1033 999 1060 1190 1301 1300 1194 1065 989 1008 1113 1246 1298
1103 1037 1126 1344 1561 1592 1418 1200 1065 1082 1247 1486 1597 1534 1304 1113 1055 1154 1374 1571 1587 1398 1177 1050 1076 1250 1485 1580
1156 1067 1170 1438 1708 1773 1572 1278 1101 1114 1316 1613 1785 1692 1415 1163 1085 1200 1474 1726 1764 1546 1249 1084 1110 1323 1621 1770
1113 1038 1125 1338 1566 1605 1457 1217 1070 1082 1244 1478 1625 1559 1329 1121 1057 1153 1367 1582 1600 1434 1191 1056 1076 1247 1480 1604
`.trim().split('\n').map((line) => line.split(' '));

const gridStep = 26.8;
const beams = [6, 36, 204, 234, 402, 431, 600, 629];
const fixtureX = [81, 282, 481, 681];
const fixtureY = [-17, 147, 312];

const Plan = () => (
  <svg width="1400" height="900" role="img" aria-label="Illuminance plan with luminaires">
    {beams.map((x) => (
      <path key={x} d={`M${x + 0.5} 0V369`} stroke="#6464f2" />
    ))}
    {fixtureY.map((y) =>
      fixtureX.map((x) => (
        <g key={`${x},${y}`} transform={`translate(${x} ${y})`} fill="#b8a40a">
          <rect width="84" height="47" rx="2" />
          <rect x="8" y="6" width="69" height="35" fill="#fff" />
          <path d="M37 21h4c0-2 1-4 2-4l6 6.500-6 6.500c-1 0-2-2-2-4h-4q-1-2.500 0-5z" />
        </g>
      )),
    )}
    {readings.map((row, r) =>
      row.map((value, c) => (
        <text key={`${r},${c}`} x={Math.round(c * gridStep - 2)} y={Math.round(r * gridStep + 20)}>
          {value}
        </text>
      )),
    )}
  </svg>
);

/* ---------- toolkit panel ---------- */

const Panel = styled.aside`
  flex: none;
  width: 149px;
  margin: 1px 0 0 2px;
  padding-left: 1px;
  border-left: 1px solid #fafafa;
  border-right: 2px solid #9fb8d6;
  background: #f0f0f0;
`;

const PanelTitle = styled.div`
  display: flex;
  align-items: center;
  justify-content: space-between;
  height: 17px;
  padding: 0 2px 0 4px;
  background: linear-gradient(#94aed0, #a6bcd9);
`;

const PanelClose = styled.button`
  display: grid;
  place-items: center;
  width: 10px;
  height: 10px;
  background: #c94f4f;
`;

const PanelBody = styled.div`
  padding: 1px 2px 0 1px;
`;

const Section = styled.button<{ $open?: boolean }>`
  display: block;
  width: 100%;
  height: 11px;
  border-top: 1px solid #e9e9e9;
  border-bottom: 1px solid #a0a0a0;
  background: #b5b5b5;
  font: ${(p) => (p.$open ? 700 : 400)} 7px/8px ${gothic};
  color: #111;
`;

const Sheet = styled.div`
  border: 1px solid #c4c4c4;
`;

const Group = styled.div<{ $h: number; $tight?: boolean }>`
  display: flex;
  flex-wrap: wrap;
  align-items: center;
  align-content: center;
  height: ${(p) => p.$h}px;
  padding: 0 3px;
  row-gap: ${(p) => (p.$tight ? 0 : 2)}px;
  & + & { border-top: 1px solid #bcbcbc; }
  ${ComboBox} select { padding-left: 1px; }
`;

const Entry = styled.label<{ $w: number; $box: number }>`
  display: flex;
  align-items: center;
  justify-content: space-between;
  width: ${(p) => p.$w}px;
  white-space: nowrap;
  input {
    width: ${(p) => p.$box}px;
    height: 12px;
    padding-left: 2px;
    background: #fff;
  }
`;

const Caption = styled.span<{ $w: number }>`
  width: ${(p) => p.$w}px;
  color: #a9a9a9;
  white-space: nowrap;
`;

const IconCell = styled.button<{ $w: number }>`
  display: flex;
  align-items: center;
  justify-content: space-between;
  flex: none;
  width: ${(p) => p.$w}px;
  height: 13px;
  padding-right: ${(p) => (p.$w > 14 ? 3 : 0)}px;
`;

const modifyRows = [
  ['grid9r>', 'poles>', 'polesR>', 'polesA>', 'lampNo>', 'lampUp>'],
  ['swap>', 'arrowR>', 'arrowR2>', 'rotate', 'align>', 'rainbow>', 'bolt', 'percent'],
  ['contrast', 'dots>', 'dots2>', 'swatch>', 'target>', 'aim', 'copyPlus>', 'stem'],
  ['fan>', 'fanGrey>', 'lock>', 'unlock>'],
];

const ModifyLine = styled.div`
  display: flex;
  align-items: center;
  width: 100%;
  height: 13px;
`;

const Modify = () => (
  <Group $h={54} $tight>
    {modifyRows.map((row, i) => (
      <ModifyLine key={i}>
        {i === 0 && <Caption $w={29}>Modify:</Caption>}
        {row.map((item) => {
          const name = item.replace('>', '');
          const menu = name !== item;
          return (
            <IconCell key={item} $w={menu ? 18 : 13} aria-label={name}>
              <Icon name={name} size={10} />
              {menu && <Icon name="tri" size={4} />}
            </IconCell>
          );
        })}
      </ModifyLine>
    ))}
  </Group>
);

const Toolkit = () => (
  <Panel>
    <PanelTitle>
      Model Toolkit
      <PanelClose aria-label="Close toolkit"><Icon name="closeWhite" size={6} /></PanelClose>
    </PanelTitle>
    <PanelBody>
      <Section>Rooms/Objects</Section>
      <Section>Calculations</Section>
      <Section>Drawing/Schedules</Section>
      <Section $open>Luminaire</Section>
      <Sheet>
        <Group $h={20}>
          <ToolButton $w={37}><Icon name="define" size={10} />Define</ToolButton>
          <Divider />
          <ToolButton $w={44}><Icon name="locate" size={10} />Locate<Icon name="tri" size={4} /></ToolButton>
        </Group>
        <Group $h={29}>
          <Combo label="Label" value="JF-700A SRF" w={106} />
          <Gap $w={2} />
          Label
          <Combo label="Channel" value=">>> N.A.-Select Scene Mgr." w={106} />
          <Gap $w={2} />
          Channel
        </Group>
        <Group $h={18}>
          <Entry $w={39} $box={24}><input defaultValue="9" />MH</Entry>
          <Gap $w={6} /><Divider /><Gap $w={1} />
          <Entry $w={48} $box={24}><input defaultValue="0" />Orient</Entry>
        </Group>
        <Group $h={17}>
          <Entry $w={38} $box={24}><input defaultValue="0" />Tilt</Entry>
          <Gap $w={6} /><Divider /><Gap $w={1} />
          <Entry $w={31} $box={15}><input defaultValue="0" />Roll</Entry>
          <Gap $w={6} /><Divider /><Gap $w={1} />
          <Entry $w={33} $box={15}><input defaultValue="0" />Spin</Entry>
        </Group>
        <Group $h={18}>
          <Entry $w={39} $box={18}><input defaultValue="0" />AimZ</Entry>
        </Group>
        <Modify />
        <Group $h={17}>
          <ToolButton $w={43}><Icon name="labels" size={10} />Labels<Icon name="tri" size={4} /></ToolButton>
          <ToolButton $w={29}><Icon name="sort" size={10} />Sort</ToolButton>
          <ToolButton><Icon name="grid9" size={10} />Aim.Diagram</ToolButton>
        </Group>
        <Group $h={15}>
          <Caption $w={60}>Parametric Mirror:</Caption>
          <IconCell $w={13} aria-label="Mirror"><Icon name="mirror" size={10} /></IconCell>
          <IconCell $w={18} aria-label="Mirror options"><Icon name="mirror2" size={10} /><Icon name="tri" size={4} /></IconCell>
        </Group>
      </Sheet>
    </PanelBody>
  </Panel>
);

/* ---------- status area ---------- */

const CommandBar = styled(Bar)`
  align-items: stretch;
  border-top: 1px solid #8a8a8a;
`;

const CommandText = styled.div`
  flex: 1;
  padding: 0 3px;
  border-left: 1px solid #888;
  border-right: 1px solid #ccc;
  margin-right: 3px;
  font: 700 7px/10px ${gothic};
  color: #000;
`;

const CommandInput = styled.input`
  width: 92px;
  border-left: 1px solid #777;
  background: #fff;
`;

const StatusBar = styled(Bar)`
  border-top: 1px solid #a5a5a5;
`;

const Coordinates = styled.div`
  flex: 1;
  height: 100%;
  padding-left: 2px;
  border-left: 1px solid #888;
  font: 7px/9px ${gothic};
`;

const StatusTools = styled.div`
  display: flex;
  align-items: center;
  flex: none;
  width: 454px;
  height: 100%;
  border-left: 1px solid #999;
  margin-top: 2px;
`;

/* ---------- taskbar ---------- */

const Taskbar = styled.footer`
  display: flex;
  align-items: center;
  flex: none;
  height: 28px;
  padding-left: 12px;
  background: #202020;
  color: #fff;
`;

const StartButton = styled.button`
  width: 22px;
`;

const SearchPill = styled.label`
  display: flex;
  align-items: center;
  width: 128px;
  height: 18px;
  margin-right: 1px;
  padding-left: 7px;
  border-radius: 9px;
  background: #f5f4f3;
  color: #555;
  input {
    flex: 1;
    min-width: 0;
    padding-left: 6px;
    font: 8px "Open Sans", sans-serif;
  }
  input::placeholder { color: #555; opacity: 1; }
`;

const SearchArt = styled.span`
  display: grid;
  place-items: center;
  width: 32px;
  height: 18px;
  border-radius: 9px;
  background: #e4e0db;
`;

const Apps = styled.div`
  display: flex;
  flex: none;
  width: 438px;
`;

const AppButton = styled.button<{ $running?: boolean; $active?: boolean }>`
  position: relative;
  display: grid;
  place-items: center;
  flex: 1;
  height: 24px;
  border-radius: 3px;
  background: ${(p) => (p.$active ? '#472a2c' : 'transparent')};
  ${(p) => p.$running && css`
    &::after {
      content: '';
      position: absolute;
      bottom: 0;
      left: 50%;
      width: 4px;
      height: 2px;
      margin-left: -2px;
      border-radius: 1px;
      background: ${p.$active ? '#f08a96' : '#9a9a9a'};
    }
  `}
`;

const Badge = styled.span`
  position: absolute;
  top: 0;
  right: 3px;
  width: 10px;
  height: 10px;
  border-radius: 5px;
  background: #c42b1c;
  font: 7px/10px ${ui};
  text-align: center;
`;

const AgiLetters = styled.span`
  position: absolute;
  top: 5px;
  width: 100%;
  font: 700 5px/8px ${gothic};
  color: #e9edf7;
  text-align: center;
`;

const Tray = styled.div`
  display: flex;
  align-items: center;
  gap: 4px;
`;

const Clock = styled.div`
  width: 38px;
  text-align: right;
  line-height: 9px;
`;

const Sliver = styled.span`
  width: 1px;
  height: 9px;
  margin: 0 3px 0 8px;
  background: #777;
`;

const Tooltip = styled.div`
  position: fixed;
  right: 0;
  bottom: 36px;
  padding: 4px 5px;
  border-radius: 2px;
  background: #2c2c2c;
  color: #fff;
  font: 7px/9px "Open Sans", sans-serif;
`;

const taskApps = [
  'copilot', 'taskview', 'news', 'teams', 'outlook*', 'chrome*', 'folder*', 'excel*', 'firefox', 'key',
  'globe*', 'gear*', 'word*', 'dialog*', 'acrobat*', 'paint*', 'agi*',
];

export default function App() {
  return (
    <Shell>
      <GlobalStyle />
      <TitleBar $h={14} as="header">
        <Icon name="logo" size={9} />
        <span>AGI32-20.10 (C:\Users\KevinSullivan\FGI Dropbox\Kevin Sullivan (kevin.sullivan)\NWCS Hortibest JF-700 SRF 50 light layout layout.AGI) - [View_1:Plan Rotated 0]</span>
        <Spacer />
        <WindowButtons>
          {['min', 'max', 'close'].map((n) => (
            <button key={n} aria-label={n}><Icon name={n} size={7} /></button>
          ))}
        </WindowButtons>
      </TitleBar>

      <MenuBar $h={15} as="nav">
        <Icon name="logo" size={9} />
        {['File', 'Edit', 'Add', 'Modify', 'View', 'Tools', 'Help'].map((m) => (
          <MenuItem key={m}>{m}</MenuItem>
        ))}
        <Spacer />
        {['mdiMin', 'mdiRestore', 'mdiClose'].map((n) => (
          <MdiButton key={n} aria-label={n}><Icon name={n} size={6} /></MdiButton>
        ))}
      </MenuBar>

      <Tools $h={15}>
        {toolRow.map((n, i) => {
          if (n === '|') return <Divider key={i} />;
          if (n === '>') return <Icon key={i} name="tri" size={5} />;
          return <ToolButton key={i} $w={13} aria-label={n}><Icon name={n} /></ToolButton>;
        })}
      </Tools>

      <ViewBar $h={17}>
        <ToolButton as="label" $w={36}>Viewpoint</ToolButton>
        <Combo label="Viewpoint" value="" w={166} />
        <Gap $w={2} />
        <ToolButton $w={13} aria-label="Previous"><Icon name="back" size={10} /></ToolButton>
        <ToolButton $w={13} aria-label="Next"><Icon name="forward" size={10} /></ToolButton>
        <ToolButton $w={14} aria-label="Delete view"><Icon name="noBox" /></ToolButton>
        <ToolButton $w={40} $muted><Icon name="greyBox" size={10} />Update</ToolButton>
        <Divider />
        <Field $w={139} aria-label="View name" defaultValue="Viewpoint_1" />
        <Gap $w={5} />
        <ToolButton><Icon name="addBox" size={10} />Add</ToolButton>
      </ViewBar>

      <ModeBar $h={15}>
        <Tab $active><Icon name="model" size={10} /><Grow />Model</Tab>
        <Tab><Icon name="render" size={10} /><Grow />Render</Tab>
        <Tab><Icon name="report" size={10} /><Grow />Reports</Tab>
        <ModeTools>
          <ToolButton $w={60}><Icon name="design" size={10} /><Grow>Design Tools</Grow><Icon name="tri" size={4} /></ToolButton>
          <Gap $w={2} />
          <Divider />
          <ToolButton $w={47}><Icon name="sun" size={10} /><Grow>Daylight</Grow><Icon name="tri" size={4} /></ToolButton>
          <Gap $w={2} />
          <Divider />
          <ToolButton $w={48}><Icon name="ray" size={10} /><Grow>Raytrace</Grow><Icon name="tri" size={4} /></ToolButton>
          <Gap $w={2} />
          <ToolButton $w={56}><Icon name="no" size={10} /><Grow>Subdivision</Grow><Icon name="tri" size={4} /></ToolButton>
          <Gap $w={2} />
          <ToolButton $w={50}><Icon name="calc" size={10} /><Grow>Calculate</Grow><Icon name="tri" size={4} /></ToolButton>
          <Gap $w={2} />
          <Divider />
          <ToolButton $w={60}><Icon name="project" size={10} /><Grow>Project Mgr.</Grow><Icon name="tri" size={4} /></ToolButton>
          <Gap $w={1} />
          <Combo label="Project" value="Project_1" />
          <Gap $w={4} />
          <ToolButton $w={52}><Icon name="scene" size={10} />Scene Mgr.</ToolButton>
          <Combo label="Scene" value="< Default >" />
        </ModeTools>
      </ModeBar>

      <Workspace as="main">
        <PlanFrame>
          <PlanView><Plan /></PlanView>
          <VScroll>
            <ScrollPiece $w={6} $h={10}><Dot /></ScrollPiece>
            <ScrollPiece $w={6} $h={31} />
            <ScrollPiece $w={6} $h={10}><Dot /></ScrollPiece>
          </VScroll>
          <HScroll>
            <ScrollPiece $w={11} $h={4}><Dot /></ScrollPiece>
            <ScrollPiece $w={65} $h={4} />
            <ScrollPiece $w={11} $h={4}><Dot /></ScrollPiece>
          </HScroll>
        </PlanFrame>
        <Toolkit />
      </Workspace>

      <CommandBar $h={12}>
        <CommandText>Select Command</CommandText>
        <CommandInput aria-label="Command" />
      </CommandBar>

      <StatusBar $h={14}>
        <Coordinates>75.192,&nbsp; 56.915,&nbsp; 0</Coordinates>
        <StatusTools>
          <ToolButton $w={13} aria-label="Pick"><Icon name="picker" size={10} /></ToolButton>
          <ToolButton $w={13} aria-label="No image"><Icon name="no" size={10} /></ToolButton>
          <ToolButton $w={13} aria-label="Info"><Icon name="info" size={10} /></ToolButton>
          <Gap $w={1} />
          <Divider />
          <ToolButton $w={83}><Icon name="image" size={10} /><Grow>Background Images</Grow><Icon name="tri" size={4} /></ToolButton>
          <Gap $w={2} />
          <Divider />
          <ToolButton $w={55}><Icon name="units" size={10} />Units: ft- Fc</ToolButton>
          <Divider />
          <ToolButton $w={67}><Icon name="isoline" size={10} /><Grow>Design Isolines</Grow><Icon name="tri" size={4} /></ToolButton>
          <Gap $w={2} />
          <Divider />
          <ToolButton $w={32}><Icon name="snap" size={10} />Snap</ToolButton>
          <Field $w={28} aria-label="Snap spacing" defaultValue="1" />
          <Gap $w={6} />
          <ToolButton $w={35}><Icon name="ortho" size={10} />Ortho</ToolButton>
          <Divider />
          <ToolButton $w={44}><Icon name="snapTo" size={10} /><Grow>SnapTo</Grow><Icon name="tri" size={4} /></ToolButton>
          <Gap $w={6} />
          <ToolButton $w={13} aria-label="Run"><Icon name="traffic" size={10} /></ToolButton>
        </StatusTools>
      </StatusBar>

      <Taskbar>
        <StartButton aria-label="Start"><Icon name="windows" size={14} /></StartButton>
        <SearchPill>
          <Icon name="search" size={9} />
          <input placeholder="Search" aria-label="Search" />
          <SearchArt><Icon name="briefcase" size={13} /></SearchArt>
        </SearchPill>
        <Apps>
          {taskApps.map((item) => {
            const name = item.replace('*', '');
            return (
              <AppButton key={name} aria-label={name} $running={name !== item} $active={name === 'dialog'}>
                <Icon name={name} size={14} />
                {name === 'news' && <Badge>1</Badge>}
                {name === 'agi' && <AgiLetters>AGI32</AgiLetters>}
              </AppButton>
            );
          })}
        </Apps>
        <Spacer />
        <Tray>
          <Icon name="caret" size={9} />
          <Gap $w={0} />
          <Icon name="wifi" size={10} />
          <Icon name="sound" size={10} />
          <Icon name="battery" size={10} />
          <Clock>3:54 PM<br />2/12/2024</Clock>
          <Icon name="bell" size={10} />
        </Tray>
        <Sliver />
      </Taskbar>
      <Tooltip role="tooltip">Show desktop</Tooltip>
    </Shell>
  );
}
